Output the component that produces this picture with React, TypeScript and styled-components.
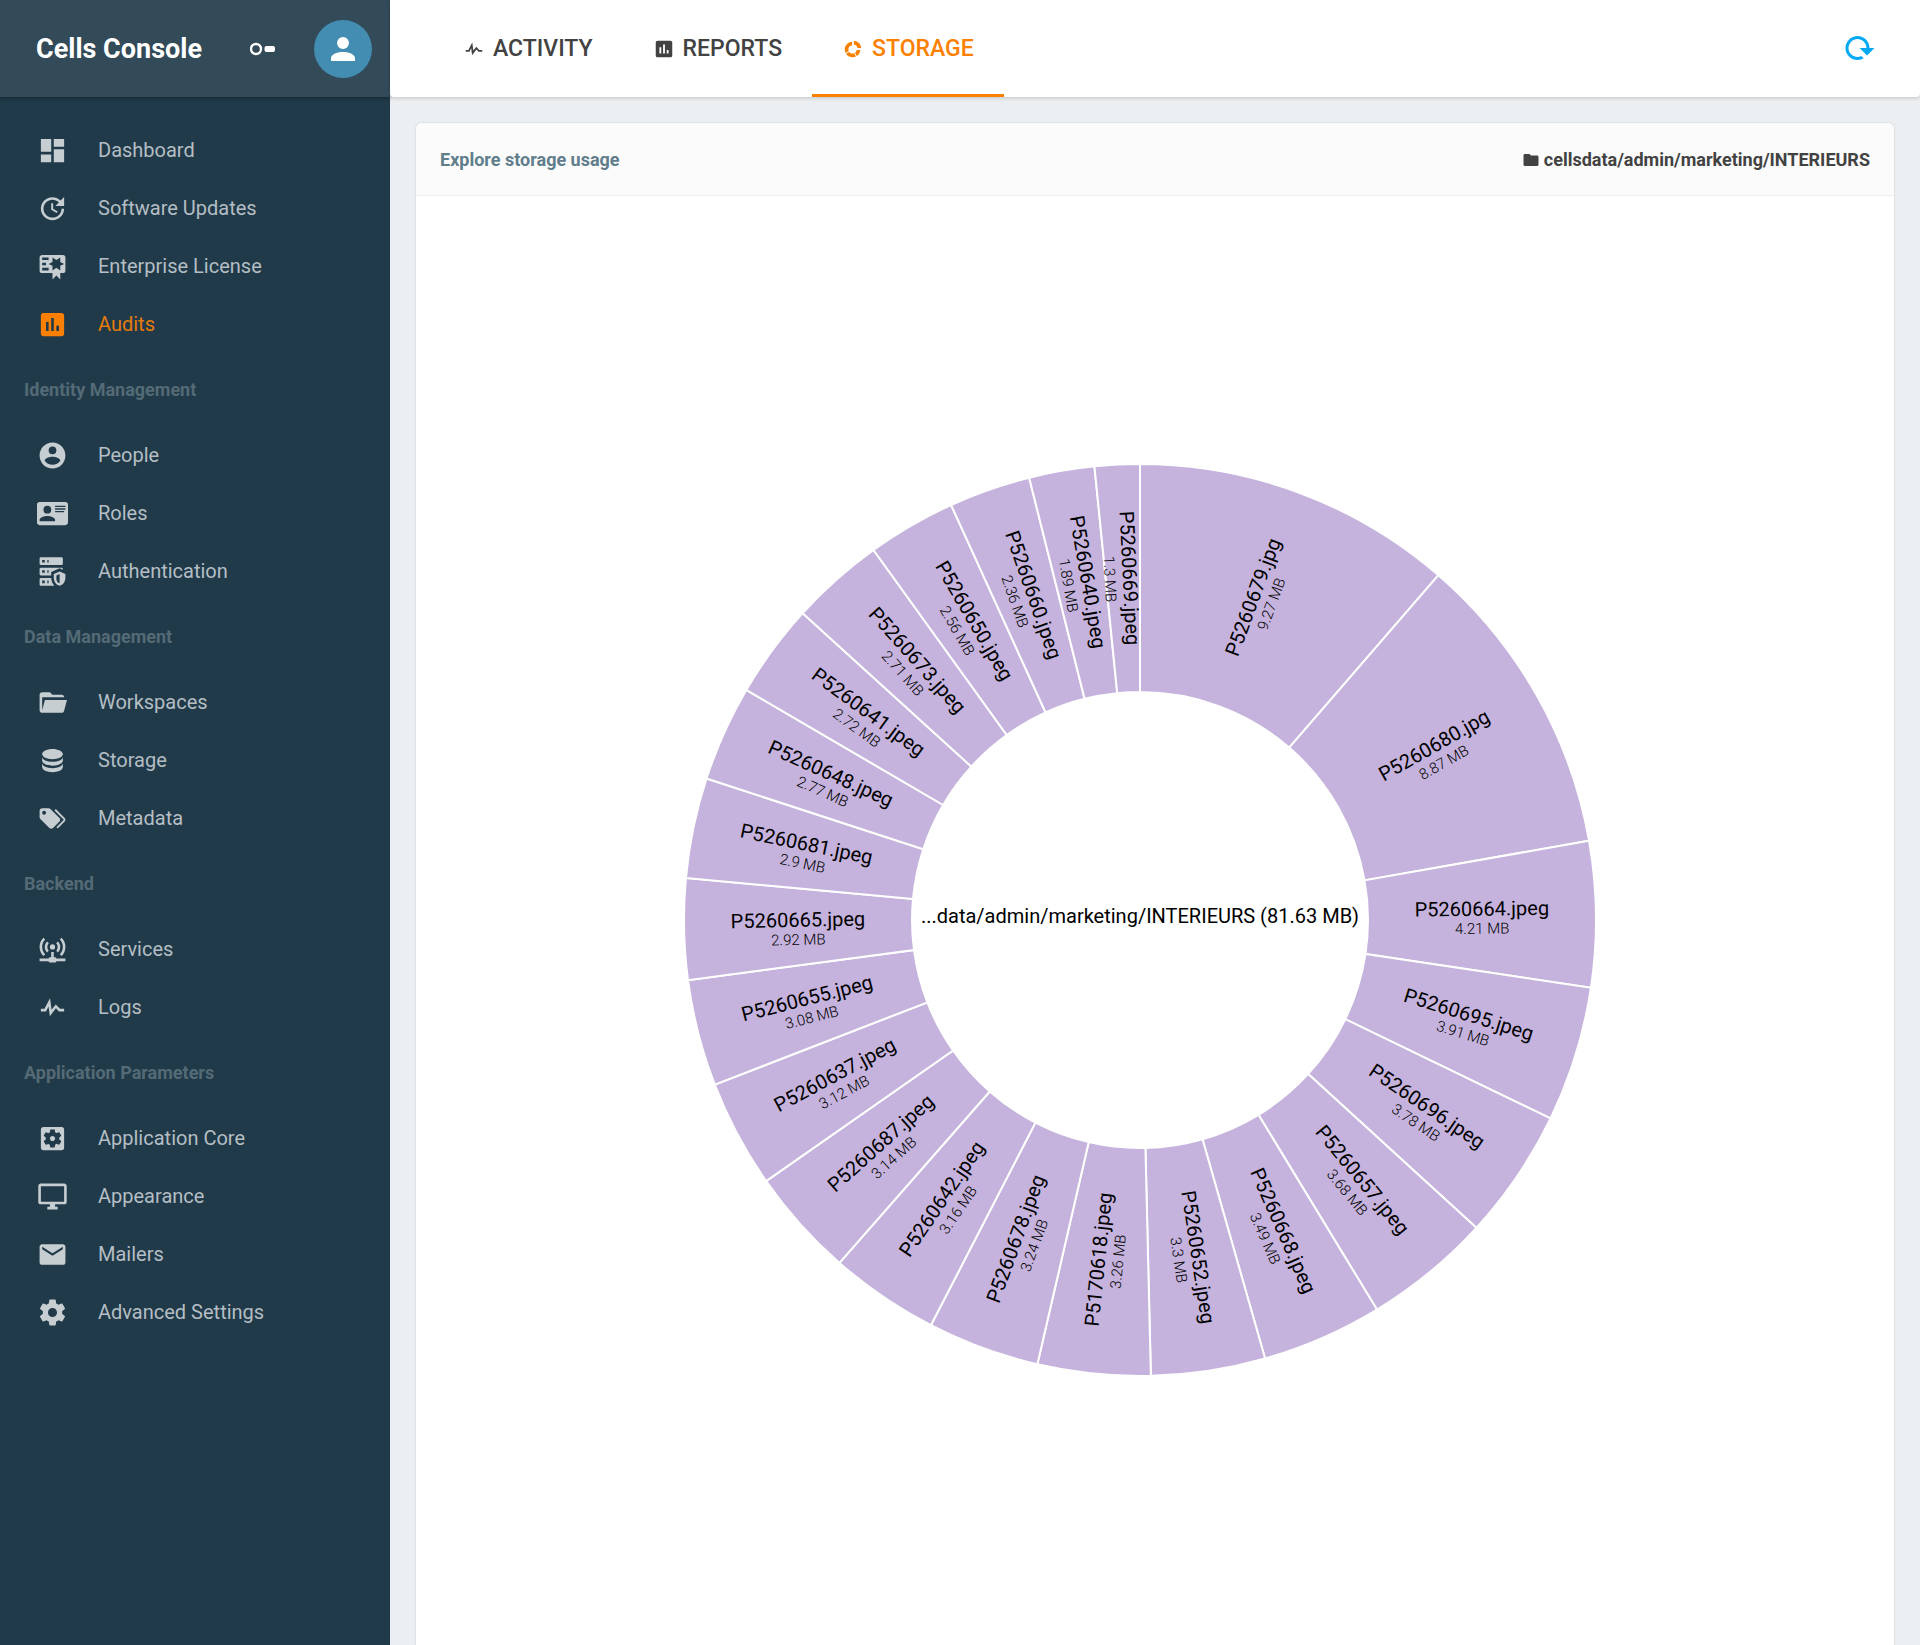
import React from 'react';
import styled, { createGlobalStyle } from 'styled-components';
import { MdSettingsApplications } from 'react-icons/md';

const GlobalStyle = createGlobalStyle`
  * { box-sizing: border-box; }
  body {
    margin: 0;
    font-family: Roboto, 'Liberation Sans', sans-serif;
    background: #eceff1;
  }
  button { font-family: inherit; }
`;

const icons = {
  dashboard: 'M13,3V9H21V3M13,21H21V11H13M3,21H11V15H3M3,13H11V3H3V13Z',
  update:
    'M21,10.12H14.22L16.96,7.3C14.23,4.6 9.81,4.5 7.08,7.2C4.35,9.91 4.35,14.28 7.08,17C9.81,19.7 14.23,19.7 16.96,17C18.32,15.65 19,14.08 19,12.1H21C21,14.08 20.12,16.65 18.36,18.39C14.85,21.87 9.15,21.87 5.64,18.39C2.14,14.92 2.11,9.28 5.62,5.81C9.13,2.34 14.76,2.34 18.27,5.81L21,3V10.12M12.5,8V12.25L16,14.33L15.28,15.54L11,13V8H12.5Z',
  certificate:
    'M4,3C2.89,3 2,3.89 2,5V15A2,2 0 0,0 4,17H12V22L15,19L18,22V17H20A2,2 0 0,0 22,15V8L22,6V5A2,2 0 0,0 20,3H16V3H4M12,5L15,7L18,5V8.5L21,10L18,11.5V15L15,13L12,15V11.5L9,10L12,8.5V5M4,5H9V7H4V5M4,9H7V11H4V9M4,13H9V15H4V13Z',
  chartBox:
    'M9,17H7V10H9V17M13,17H11V7H13V17M17,17H15V13H17V17M19,3H5A2,2 0 0,0 3,5V19A2,2 0 0,0 5,21H19A2,2 0 0,0 21,19V5C21,3.89 20.1,3 19,3Z',
  chartArc:
    'M16.18,19.6L14.17,16.12C15.15,15.4 15.83,14.28 15.97,13H20C19.83,15.76 18.35,18.16 16.18,19.6M13,7.03V3C17.3,3.26 20.74,6.7 21,11H16.97C16.74,8.91 15.09,7.26 13,7.03M7,12.5C7,13.14 7.13,13.75 7.38,14.3L3.9,16.31C3.32,15.16 3,13.87 3,12.5C3,7.97 6.54,4.27 11,4V8.03C8.75,8.28 7,10.18 7,12.5M11.5,21C8.53,21 5.92,19.5 4.4,17.18L7.88,15.17C8.7,16.28 10,17 11.5,17C12.14,17 12.75,16.87 13.3,16.62L15.31,20.1C14.16,20.68 12.87,21 11.5,21Z',
  account:
    'M12,4A4,4 0 0,1 16,8A4,4 0 0,1 12,12A4,4 0 0,1 8,8A4,4 0 0,1 12,4M12,14C16.42,14 20,15.79 20,18V20H4V18C4,15.79 7.58,14 12,14Z',
  accountCircle:
    'M12,19.2C9.5,19.2 7.29,17.92 6,16C6.03,14 10,12.9 12,12.9C14,12.9 17.97,14 18,16C16.71,17.92 14.5,19.2 12,19.2M12,5A3,3 0 0,1 15,8A3,3 0 0,1 12,11A3,3 0 0,1 9,8A3,3 0 0,1 12,5M12,2A10,10 0 0,0 2,12A10,10 0 0,0 12,22A10,10 0 0,0 22,12C22,6.47 17.5,2 12,2Z',
  card: 'M2,3H22C23.05,3 24,3.95 24,5V19C24,20.05 23.05,21 22,21H2C0.95,21 0,20.05 0,19V5C0,3.95 0.95,3 2,3M14,6V7H22V6H14M14,8V9H21.5L22,9V8H14M14,10V11H21V10H14M8,13.91C6,13.91 2,15 2,17V18H14V17C14,15 10,13.91 8,13.91M8,6A3,3 0 0,0 5,9A3,3 0 0,0 8,12A3,3 0 0,0 11,9A3,3 0 0,0 8,6Z',
  serverSecurity:
    'M3,1H19A1,1 0 0,1 20,2V6A1,1 0 0,1 19,7H3A1,1 0 0,1 2,6V2A1,1 0 0,1 3,1M3,9H19A1,1 0 0,1 20,10V10.67L17.5,9.56L11,12.44V15H3A1,1 0 0,1 2,14V10A1,1 0 0,1 3,9M3,17H11C11.06,19.25 12,21.4 13.46,23H3A1,1 0 0,1 2,22V18A1,1 0 0,1 3,17M8,5H9V3H8V5M8,13H9V11H8V13M8,21H9V19H8V21M4,3V5H6V3H4M4,11V13H6V11H4M4,19V21H6V19H4M17.5,12L22,14V17C22,19.78 20.08,22.37 17.5,23C14.92,22.37 13,19.78 13,17V14L17.5,12M17.5,13.94L15,15.06V17.72C15,19.26 16.07,20.7 17.5,21.06V13.94Z',
  folder:
    'M10,4H4C2.89,4 2,4.89 2,6V18A2,2 0 0,0 4,20H20A2,2 0 0,0 22,18V8C22,6.89 21.1,6 20,6H12L10,4Z',
  folderOpen:
    'M19,20H4C2.89,20 2,19.1 2,18V6C2,4.89 2.89,4 4,4H10L12,6H19A2,2 0 0,1 21,8H21L4,8V18L6.14,10H23.21L20.93,18.5C20.7,19.37 19.92,20 19,20Z',
  database:
    'M12,3C7.58,3 4,4.79 4,7C4,9.21 7.58,11 12,11C16.42,11 20,9.21 20,7C20,4.79 16.42,3 12,3M4,9V12C4,14.21 7.58,16 12,16C16.42,16 20,14.21 20,12V9C20,11.21 16.42,13 12,13C7.58,13 4,11.21 4,9M4,14V17C4,19.21 7.58,21 12,21C16.42,21 20,19.21 20,17V14C20,16.21 16.42,18 12,18C7.58,18 4,16.21 4,14Z',
  tags: 'M5.5,9A1.5,1.5 0 0,0 7,7.5A1.5,1.5 0 0,0 5.5,6A1.5,1.5 0 0,0 4,7.5A1.5,1.5 0 0,0 5.5,9M17.41,11.58C17.77,11.94 18,12.44 18,13C18,13.55 17.78,14.05 17.41,14.41L12.41,19.41C12.05,19.77 11.55,20 11,20C10.45,20 9.95,19.78 9.58,19.41L2.59,12.42C2.22,12.05 2,11.55 2,11V6C2,4.89 2.89,4 4,4H9C9.55,4 10.05,4.22 10.41,4.58L17.41,11.58M13.54,5.71L14.54,4.71L21.41,11.58C21.78,11.94 22,12.45 22,13C22,13.55 21.78,14.05 21.42,14.41L16.04,19.79L15.04,18.79L20.75,13L13.54,5.71Z',
  accessPoint:
    'M4.93,2.93C3.12,4.74 2,7.24 2,10C2,12.76 3.12,15.26 4.93,17.07L6.34,15.66C4.89,14.22 4,12.22 4,10C4,7.79 4.89,5.78 6.34,4.34L4.93,2.93M19.07,2.93L17.66,4.34C19.11,5.78 20,7.79 20,10C20,12.22 19.11,14.22 17.66,15.66L19.07,17.07C20.88,15.26 22,12.76 22,10C22,7.24 20.88,4.74 19.07,2.93M7.76,5.76C6.67,6.85 6,8.35 6,10C6,11.65 6.67,13.15 7.76,14.24L9.17,12.83C8.45,12.11 8,11.11 8,10C8,8.89 8.45,7.89 9.17,7.17L7.76,5.76M16.24,5.76L14.83,7.17C15.55,7.89 16,8.89 16,10C16,11.11 15.55,12.11 14.83,12.83L16.24,14.24C17.33,13.15 18,11.65 18,10C18,8.35 17.33,6.85 16.24,5.76M12,8A2,2 0 0,0 10,10A2,2 0 0,0 12,12A2,2 0 0,0 14,10A2,2 0 0,0 12,8M11,14V18H10A1,1 0 0,0 9,19H2V21H9A1,1 0 0,0 10,22H14A1,1 0 0,0 15,21H22V19H15A1,1 0 0,0 14,18H13V14H11Z',
  pulse:
    'M3,13H5.79L10.1,4.79L11.28,13.75L14.5,9.66L17.83,13H21V15H17L14.67,12.67L9.92,18.73L8.94,11.31L7,15H3V13Z',
  monitor:
    'M21,16H3V4H21M21,2H3C1.89,2 1,2.89 1,4V16A2,2 0 0,0 3,18H10V20H8V22H16V20H14V18H21A2,2 0 0,0 23,16V4C23,2.89 22.1,2 21,2Z',
  email:
    'M20,8L12,13L4,8V6L12,11L20,6M20,4H4C2.89,4 2,4.89 2,6V18A2,2 0 0,0 4,20H20A2,2 0 0,0 22,18V6C22,4.89 21.1,4 20,4Z',
  cog: 'M12,15.5A3.5,3.5 0 0,1 8.5,12A3.5,3.5 0 0,1 12,8.5A3.5,3.5 0 0,1 15.5,12A3.5,3.5 0 0,1 12,15.5M19.43,12.97C19.47,12.65 19.5,12.33 19.5,12C19.5,11.67 19.47,11.34 19.43,11L21.54,9.37C21.73,9.22 21.78,8.95 21.66,8.73L19.66,5.27C19.54,5.05 19.27,4.96 19.05,5.05L16.56,6.05C16.04,5.66 15.5,5.32 14.87,5.07L14.5,2.42C14.46,2.18 14.25,2 14,2H10C9.75,2 9.54,2.18 9.5,2.42L9.13,5.07C8.5,5.32 7.96,5.66 7.44,6.05L4.95,5.05C4.73,4.96 4.46,5.05 4.34,5.27L2.34,8.73C2.21,8.95 2.27,9.22 2.46,9.37L4.57,11C4.53,11.34 4.5,11.67 4.5,12C4.5,12.33 4.53,12.65 4.57,12.97L2.46,14.63C2.27,14.78 2.21,15.05 2.34,15.27L4.34,18.73C4.46,18.95 4.73,19.03 4.95,18.95L7.44,17.94C7.96,18.34 8.5,18.68 9.13,18.93L9.5,21.58C9.54,21.82 9.75,22 10,22H14C14.25,22 14.46,21.82 14.5,21.58L14.87,18.93C15.5,18.67 16.04,18.34 16.56,17.94L19.05,18.95C19.27,19.03 19.54,18.95 19.66,18.73L21.66,15.27C21.78,15.05 21.73,14.78 21.54,14.63L19.43,12.97Z',
  reload:
    'M19,12H22.32L17.37,16.95L12.42,12H16.97C17,10.46 16.42,8.93 15.24,7.75C12.9,5.41 9.1,5.41 6.76,7.75C4.42,10.09 4.42,13.9 6.76,16.24C8.6,18.08 11.36,18.47 13.58,17.41L15.05,18.88C12,20.69 8,20.29 5.34,17.65C2.22,14.53 2.23,9.47 5.35,6.35C8.5,3.22 13.53,3.21 16.66,6.34C18.22,7.9 19,9.95 19,12Z',
};

type IconName = keyof typeof icons;

const Icon = ({ name, size }: { name: IconName; size: number }) => (
  <svg width={size} height={size} viewBox="0 0 24 24" fill="currentColor" aria-hidden="true">
    <path fillRule="evenodd" d={icons[name]} />
  </svg>
);

const CollapseIcon = ({ size }: { size: number }) => (
  <svg width={size} height={size} viewBox="0 0 26 26" fill="none" aria-hidden="true">
    <circle cx="6" cy="13" r="5" stroke="currentColor" strokeWidth="2.4" />
    <rect x="14.5" y="10" width="10.5" height="6" rx="2" fill="currentColor" />
  </svg>
);

const Page = styled.div`
  display: grid;
  grid-template-columns: 390px minmax(0, 1fr);
  height: 100vh;
  overflow: hidden;
`;

const Sidebar = styled.aside`
  display: flex;
  flex-direction: column;
  min-height: 0;
  background: #203a49;
`;

const Brand = styled.header`
  display: flex;
  flex: none;
  align-items: center;
  height: 97px;
  padding: 0 18px 0 36px;
  color: #fff;
  background: #334a58;
  box-shadow: 0 1px 4px rgba(0, 0, 0, 0.35);
`;

const BrandName = styled.h1`
  flex: 1;
  margin: 0;
  font-size: 27px;
  line-height: 36px;
  font-weight: 700;
`;

const CollapseButton = styled.button`
  display: flex;
  margin-right: 38px;
  padding: 0;
  border: 0;
  color: inherit;
  background: none;
`;

const Avatar = styled.button`
  display: flex;
  align-items: center;
  justify-content: center;
  width: 58px;
  height: 58px;
  padding: 0;
  border: 0;
  border-radius: 50%;
  color: #fff;
  background: #438db3;
`;

const Nav = styled.nav`
  flex: 1;
  min-height: 0;
  padding-top: 24px;
  overflow-y: auto;
  scrollbar-width: none;
`;

const Section = styled.section`
  margin-bottom: 11px;
`;

const SectionTitle = styled.h2`
  margin: 0;
  padding: 14px 24px 24px;
  font-size: 18px;
  line-height: 24px;
  font-weight: 700;
  color: #546a76;
`;

const NavLink = styled.a<{ $active?: boolean }>`
  display: flex;
  align-items: center;
  gap: 30px;
  height: 58px;
  padding-left: 37px;
  font-size: 20px;
  line-height: 24px;
  color: ${(p) => (p.$active ? '#e57a0c' : '#b4bec4')};
  text-decoration: none;
  svg {
    flex: none;
    color: ${(p) => (p.$active ? '#fb7f02' : '#c7ced2')};
  }
`;

const Main = styled.div`
  display: flex;
  flex-direction: column;
  min-width: 0;
  min-height: 0;
`;

const TopBar = styled.header`
  display: flex;
  flex: none;
  align-items: center;
  justify-content: space-between;
  height: 97px;
  padding: 0 43px;
  border-radius: 0 0 4px 4px;
  background: #fff;
  box-shadow: 0 1px 4px rgba(0, 0, 0, 0.18);
`;

const Tabs = styled.div`
  display: flex;
  align-self: stretch;
`;

const Tab = styled.button<{ $active?: boolean }>`
  display: flex;
  align-items: center;
  gap: 8px;
  padding: 4px 30px 0;
  border: 0;
  border-bottom: 3px solid ${(p) => (p.$active ? '#fb8000' : 'transparent')};
  font-size: 23px;
  line-height: 28px;
  font-weight: 500;
  color: ${(p) => (p.$active ? '#fb8000' : '#424242')};
  background: none;
`;

const ReloadButton = styled.button`
  display: flex;
  padding: 0 0 2px;
  border: 0;
  color: #03a9f4;
  background: none;
`;

const Content = styled.main`
  flex: 1;
  min-height: 0;
  padding: 26px;
  overflow-y: auto;
  scrollbar-width: none;
`;

const Card = styled.section`
  border-radius: 6px;
  background: #fff;
  box-shadow: 0 0 2px rgba(0, 0, 0, 0.2);
`;

const CardHeader = styled.header`
  display: flex;
  align-items: center;
  justify-content: space-between;
  height: 73px;
  padding: 2px 24px 0;
  border-bottom: 1px solid #eceff1;
  border-radius: 6px 6px 0 0;
  font-size: 18px;
  line-height: 24px;
  font-weight: 700;
  background: #fbfbfb;
`;

const CardTitle = styled.h2`
  margin: 0;
  font-size: inherit;
  font-weight: inherit;
  color: #607d8b;
`;

const PathLabel = styled.div`
  display: flex;
  align-items: center;
  gap: 4px;
  color: #424242;
`;

const ChartArea = styled.div`
  padding: 0 30px 30px 0;
`;

const Chart = styled.svg`
  display: block;
  width: 100%;
  height: auto;
`;

const Slice = styled.path`
  fill: #c5b3dd;
  stroke: #fff;
  stroke-width: 2px;
`;

const FileLabel = styled.text`
  font-size: 20px;
  text-anchor: middle;
`;

const SizeLabel = styled.text`
  font-size: 15px;
  font-weight: 300;
  text-anchor: middle;
`;

type Item = { icon: IconName | 'settingsBox'; label: string; active?: boolean };

const sections: { title?: string; items: Item[] }[] = [
  {
    items: [
      { icon: 'dashboard', label: 'Dashboard' },
      { icon: 'update', label: 'Software Updates' },
      { icon: 'certificate', label: 'Enterprise License' },
      { icon: 'chartBox', label: 'Audits', active: true },
    ],
  },
  {
    title: 'Identity Management',
    items: [
      { icon: 'accountCircle', label: 'People' },
      { icon: 'card', label: 'Roles' },
      { icon: 'serverSecurity', label: 'Authentication' },
    ],
  },
  {
    title: 'Data Management',
    items: [
      { icon: 'folderOpen', label: 'Workspaces' },
      { icon: 'database', label: 'Storage' },
      { icon: 'tags', label: 'Metadata' },
    ],
  },
  {
    title: 'Backend',
    items: [
      { icon: 'accessPoint', label: 'Services' },
      { icon: 'pulse', label: 'Logs' },
    ],
  },
  {
    title: 'Application Parameters',
    items: [
      { icon: 'settingsBox', label: 'Application Core' },
      { icon: 'monitor', label: 'Appearance' },
      { icon: 'email', label: 'Mailers' },
      { icon: 'cog', label: 'Advanced Settings' },
    ],
  },
];

const files: [string, number][] = [
  ['P5260679.jpg', 9.27],
  ['P5260680.jpg', 8.87],
  ['P5260664.jpeg', 4.21],
  ['P5260695.jpeg', 3.91],
  ['P5260696.jpeg', 3.78],
  ['P5260657.jpeg', 3.68],
  ['P5260668.jpeg', 3.49],
  ['P5260652.jpeg', 3.3],
  ['P5170618.jpeg', 3.26],
  ['P5260678.jpeg', 3.24],
  ['P5260642.jpeg', 3.16],
  ['P5260687.jpeg', 3.14],
  ['P5260637.jpeg', 3.12],
  ['P5260655.jpeg', 3.08],
  ['P5260665.jpeg', 2.92],
  ['P5260681.jpeg', 2.9],
  ['P5260648.jpeg', 2.77],
  ['P5260641.jpeg', 2.72],
  ['P5260673.jpeg', 2.71],
  ['P5260650.jpeg', 2.56],
  ['P5260660.jpeg', 2.36],
  ['P5260640.jpeg', 1.89],
  ['P5260669.jpeg', 1.3],
];

const OUTER = 456;
const INNER = 228;
const total = files.reduce((sum, [, size]) => sum + size, 0);

const point = (radius: number, angle: number) =>
  `${(radius * Math.sin(angle)).toFixed(2)},${(-radius * Math.cos(angle)).toFixed(2)}`;

const slicePath = (start: number, end: number) =>
  `M${point(OUTER, start)}A${OUTER},${OUTER} 0 0,1 ${point(OUTER, end)}` +
  `L${point(INNER, end)}A${INNER},${INNER} 0 0,0 ${point(INNER, start)}Z`;

const slices = files.map(([name, size], index) => {
  const before = files.slice(0, index).reduce((sum, [, s]) => sum + s, 0);
  const start = (before / total) * 2 * Math.PI;
  const end = ((before + size) / total) * 2 * Math.PI;
  const middle = (start + end) / 2;
  const degrees = (middle * 180) / Math.PI;
  // Labels on the left half are turned round so that they stay upright.
  const rotation = degrees > 180 ? degrees - 270 : degrees - 90;
  return {
    name,
    size,
    path: slicePath(start, end),
    transform: `translate(${point((OUTER + INNER) / 2, middle)}) rotate(${rotation.toFixed(2)})`,
  };
});

const StorageChart = () => (
  <Chart viewBox="-724 -724 1448 1448" role="img" aria-label="Storage usage by file">
    {slices.map((slice) => (
      <Slice key={slice.name} d={slice.path} />
    ))}
    {slices.map((slice) => (
      <g key={slice.name} transform={slice.transform}>
        <FileLabel>{slice.name}</FileLabel>
        <SizeLabel y="18">{slice.size} MB</SizeLabel>
      </g>
    ))}
    <FileLabel y="3">...data/admin/marketing/INTERIEURS (81.63 MB)</FileLabel>
  </Chart>
);

export default function App() {
  return (
    <Page>
      <GlobalStyle />
      <Sidebar>
        <Brand>
          <BrandName>Cells Console</BrandName>
          <CollapseButton aria-label="Collapse menu">
            <CollapseIcon size={26} />
          </CollapseButton>
          <Avatar aria-label="Account">
            <Icon name="account" size={36} />
          </Avatar>
        </Brand>
        <Nav>
          {sections.map((section, index) => (
            <Section key={index}>
              {section.title && <SectionTitle>{section.title}</SectionTitle>}
              {section.items.map((item) => (
                <NavLink key={item.label} href="#" $active={item.active}>
                  {item.icon === 'settingsBox' ? (
                    <MdSettingsApplications size={31} />
                  ) : (
                    <Icon name={item.icon} size={31} />
                  )}
                  {item.label}
                </NavLink>
              ))}
            </Section>
          ))}
        </Nav>
      </Sidebar>
      <Main>
        <TopBar>
          <Tabs role="tablist">
            <Tab role="tab" aria-selected="false">
              <Icon name="pulse" size={22} />
              ACTIVITY
            </Tab>
            <Tab role="tab" aria-selected="false">
              <Icon name="chartBox" size={22} />
              REPORTS
            </Tab>
            <Tab role="tab" aria-selected="true" $active>
              <Icon name="chartArc" size={22} />
              STORAGE
            </Tab>
          </Tabs>
          <ReloadButton aria-label="Reload">
            <Icon name="reload" size={36} />
          </ReloadButton>
        </TopBar>
        <Content>
          <Card>
            <CardHeader>
              <CardTitle>Explore storage usage</CardTitle>
              <PathLabel>
                <Icon name="folder" size={18} />
                cellsdata/admin/marketing/INTERIEURS
              </PathLabel>
            </CardHeader>
            <ChartArea>
              <StorageChart />
            </ChartArea>
          </Card>
        </Content>
      </Main>
    </Page>
  );
}
